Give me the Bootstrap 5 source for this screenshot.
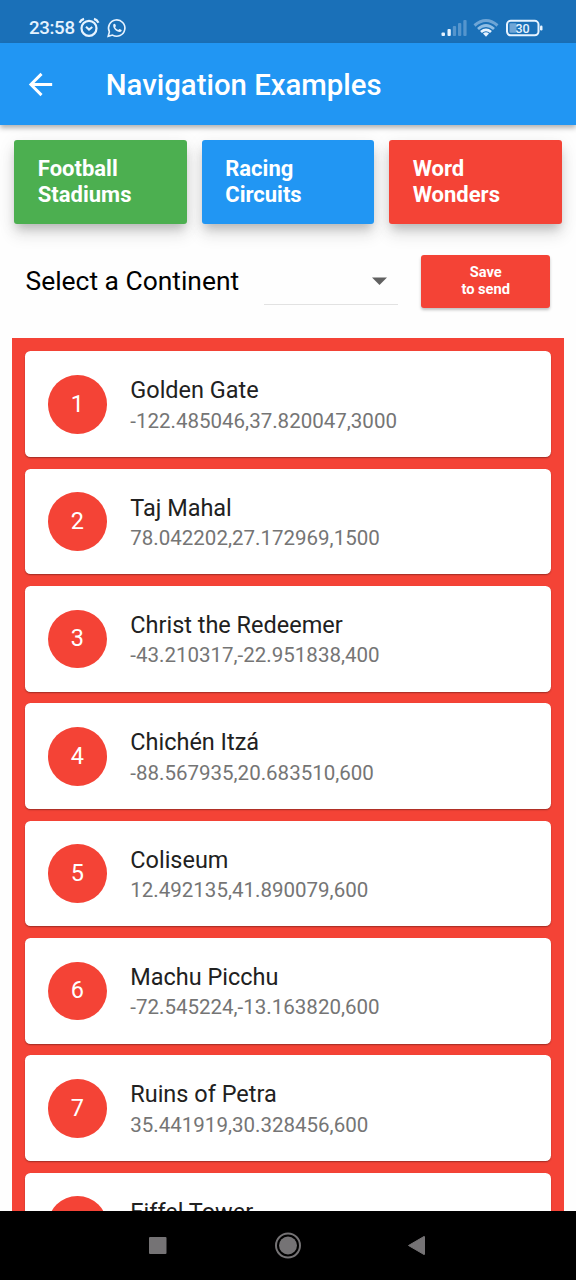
<!DOCTYPE html>
<html lang="en">
<head>
<meta charset="utf-8">
<meta name="viewport" content="width=device-width, initial-scale=1">
<title>Navigation Examples</title>
<link href="https://cdn.jsdelivr.net/npm/bootstrap@5.3.0/dist/css/bootstrap.min.css" rel="stylesheet">
<style>
:root { --red: #f44336; --blue: #2196f3; --green: #4caf50; }
body { font-family: Roboto, "Liberation Sans", sans-serif; background: #fefefe; color: #000; }
.screen { height: 1280px; width: 576px; }
.status { height: 43px; background: #1a70b8; color: #e6f3ff; padding: 12px 33px 0 29px; line-height: 32px; flex: none; }
.status svg { display: block; }
.clock { letter-spacing: -.35px; font-weight: 500; font-size: 18.7px; width: 45.5px; }
.appbar { height: 82px; background: var(--blue); padding-left: 23.2px; box-shadow: 0 3px 5px rgba(0,0,0,.3); flex: none; position: relative; z-index: 1; }
.appbar h1 { font-size: 29.33px; font-weight: 500; margin: 0 0 0 47.6px; padding-top: 2px; line-height: 34px; white-space: nowrap; }
.tabs { padding: 14.5px 14.1px 0 14.3px; gap: 14.7px; flex: none; }
.tabs .btn { height: 84.5px; border: 0; border-radius: 3px; color: #fff; font-size: 22px; font-weight: 700; line-height: 26px; padding: 1px 0 0 23.5px; text-align: left; flex: 1 1 0; box-shadow: 0 7px 9px -3px rgba(0,0,0,.18), 0 11px 16px 1px rgba(0,0,0,.09), 0 3px 18px 2px rgba(0,0,0,.05); }
.green { background: var(--green) !important; }
.blue { background: var(--blue) !important; }
.red { background: var(--red) !important; }
.filter { height: 114px; padding: 30.5px 25px 0 25.5px; flex: none; }
.filter label { font-size: 26.4px; line-height: 53px; width: 238.5px; white-space: nowrap; }
.picker { width: 134px; height: 50px; border: 0; border-bottom: 1px solid #e2e2e2; background: none; padding: 4px 11px 0 0; }
.save { width: 129px; height: 53px; margin-left: 23.2px; border: 0; border-radius: 3px; color: #fff; font-weight: 700; font-size: 14.67px; line-height: 17.5px; padding: 0; box-shadow: 0 2px 3px rgba(0,0,0,.25); }
.places { margin: 0 12px; padding: 13.3px 13px 0 12.7px; background: var(--red); gap: 11.75px; min-height: 0; overflow: hidden; flex: 1 1 0; }
.place { height: 105.6px; flex: none; background: #fff; border: 0; border-radius: 5.5px; padding: .4px 0 0 23.3px; box-shadow: 0 1px 1.5px rgba(0,0,0,.35); }
.num { width: 58.7px; height: 58.7px; flex: none; color: #fff; font-size: 23.47px; }
.place .info { margin-left: 23.6px; height: 56px; }
.place h2 { font-size: 23.47px; font-weight: 400; line-height: 28px; margin: 0; color: #212121; }
.place p { font-size: 20.53px; line-height: 24px; margin: 4.4px 0 0; color: #757575; }
.navkeys { height: 69px; background: #000; flex: none; }
</style>
</head>
<body>
<div class="screen d-flex flex-column overflow-hidden">
  <div class="status d-flex justify-content-between">
    <div class="d-flex">
      <span class="clock">23:58</span>
      <svg width="60" height="24" style="margin-top:4px;margin-left:2px" fill="none" stroke="#e6f3ff">
        <circle cx="12" cy="12.3" r="7.5" stroke-width="2.2"/>
        <path d="M2.500 6.700Q4 3.800 7 2.900M21.500 6.700Q20 3.800 17 2.900" stroke-width="2.200"/>
        <path d="M9 10.800L12 13.600L15.300 11" stroke-width="2"/>
        <path d="M31.200 20.300L32.400 15.800A8.200 8.200 0 1 1 35.500 19.100Z" stroke-width="1.600"/>
        <path d="M36.400 8.300C37 7.500 38 7.500 38.300 8.300L38.900 9.800C39 10.400 38.300 11 38.100 11.300C38.800 12.700 40 13.600 41.200 14C41.700 13.700 42.100 12.800 42.600 12.900L44.600 13.900C45 14.500 44.200 15.900 42.900 16.100C39.500 16.300 35.200 11.800 36.400 8.300Z" fill="#e6f3ff" stroke="none"/>
      </svg>
    </div>
    <svg width="103" height="24" style="margin-top:4px" fill="none">
      <g fill="#e6f3ff"><rect x="1.500" y="16.500" width="3.500" height="3.500" rx="1"/><rect x="7.500" y="13" width="3.300" height="7" rx="1"/></g>
      <g fill="#5595cd"><rect x="12.800" y="10" width="3.300" height="10" rx="1"/><rect x="18" y="7" width="3.300" height="13" rx="1"/><rect x="23.300" y="4" width="3.300" height="16" rx="1"/></g>
      <path d="M34.500 9.500Q46 -0.500 57.500 9.500" stroke="#6ea5d6" stroke-width="3"/>
      <path d="M38 13Q46 6 54 13" stroke="#8fbde4" stroke-width="2.800"/>
      <path d="M41 16Q46 11.800 51 16" stroke="#e6f3ff" stroke-width="2.800"/>
      <path d="M43 17.500Q46 15.200 49 17.500L46 20.800Z" fill="#e6f3ff"/>
      <rect x="67" y="4.800" width="31.500" height="14.500" rx="3.800" stroke="#e6f3ff" stroke-width="2"/>
      <rect x="69.500" y="7.300" width="7" height="9.500" rx="1" fill="#6ea5d6"/>
      <rect x="100" y="9.500" width="2.500" height="5" rx="1.200" fill="#e6f3ff"/>
      <text x="82.500" y="16.500" font-size="12.500" font-weight="500" text-anchor="middle" fill="#e6f3ff">30</text>
    </svg>
  </div>

  <header class="appbar d-flex align-items-center text-white">
    <svg width="35" height="35" viewBox="0 0 24 24" fill="#fff"><path d="M20 11H7.830l5.590-5.590L12 4l-8 8 8 8 1.410-1.410L7.830 13H20v-2z"/></svg>
    <h1>Navigation Examples</h1>
  </header>

  <div class="tabs d-flex">
    <button class="btn green">Football<br>Stadiums</button>
    <button class="btn blue">Racing<br>Circuits</button>
    <button class="btn red">Word<br>Wonders</button>
  </div>

  <div class="filter d-flex align-items-start">
    <label for="continent">Select a Continent</label>
    <button id="continent" class="picker d-flex align-items-center justify-content-end" aria-label="Continent">
      <svg width="15" height="8"><path d="M0 .5H15L7.500 8Z" fill="#616161"/></svg>
    </button>
    <button class="btn save red">Save<br>to send</button>
  </div>

  <main class="places d-flex flex-column">
    <div class="place d-flex align-items-center"><span class="num red rounded-circle d-flex align-items-center justify-content-center">1</span><div class="info"><h2>Golden Gate</h2><p>-122.485046,37.820047,3000</p></div></div>
    <div class="place d-flex align-items-center"><span class="num red rounded-circle d-flex align-items-center justify-content-center">2</span><div class="info"><h2>Taj Mahal</h2><p>78.042202,27.172969,1500</p></div></div>
    <div class="place d-flex align-items-center"><span class="num red rounded-circle d-flex align-items-center justify-content-center">3</span><div class="info"><h2>Christ the Redeemer</h2><p>-43.210317,-22.951838,400</p></div></div>
    <div class="place d-flex align-items-center"><span class="num red rounded-circle d-flex align-items-center justify-content-center">4</span><div class="info"><h2>Chichén Itzá</h2><p>-88.567935,20.683510,600</p></div></div>
    <div class="place d-flex align-items-center"><span class="num red rounded-circle d-flex align-items-center justify-content-center">5</span><div class="info"><h2>Coliseum</h2><p>12.492135,41.890079,600</p></div></div>
    <div class="place d-flex align-items-center"><span class="num red rounded-circle d-flex align-items-center justify-content-center">6</span><div class="info"><h2>Machu Picchu</h2><p>-72.545224,-13.163820,600</p></div></div>
    <div class="place d-flex align-items-center"><span class="num red rounded-circle d-flex align-items-center justify-content-center">7</span><div class="info"><h2>Ruins of Petra</h2><p>35.441919,30.328456,600</p></div></div>
    <div class="place d-flex align-items-center"><span class="num red rounded-circle"></span><div class="info"><h2>Eiffel Tower</h2></div></div>
  </main>

  <nav class="navkeys">
    <svg width="576" height="69" class="d-block">
      <rect x="149" y="26" width="17.500" height="17" rx="1" fill="#757375"/>
      <circle cx="288" cy="34.500" r="12" fill="none" stroke="#757375" stroke-width="2"/>
      <circle cx="288" cy="34.500" r="9" fill="#757375"/>
      <path d="M408.500 34.500L424 25.500Q424.500 25.200 424.500 26V43Q424.500 43.800 424 43.500Z" fill="#757375" stroke="#757375"/>
    </svg>
  </nav>
</div>
<script src="https://cdn.jsdelivr.net/npm/bootstrap@5.3.0/dist/js/bootstrap.bundle.min.js"></script>
</body>
</html>
